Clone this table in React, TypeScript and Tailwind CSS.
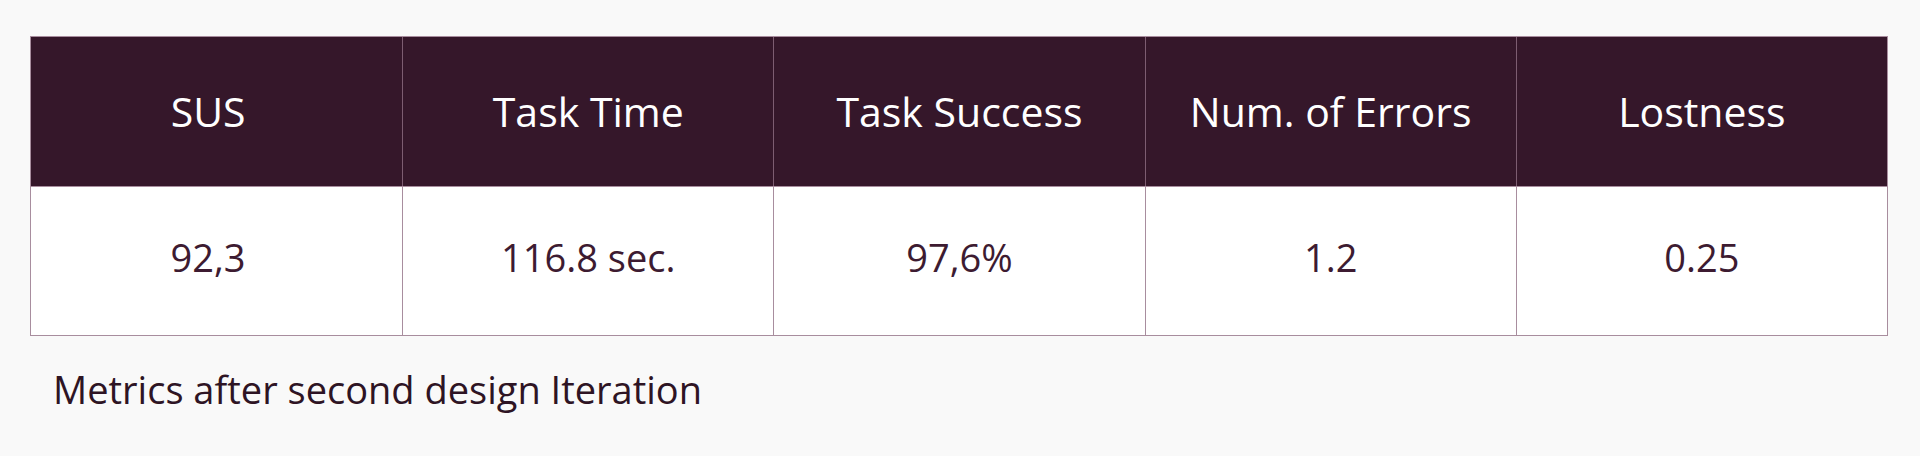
import React from "react";

const headers = ["SUS", "Task Time", "Task Success", "Num. of Errors", "Lostness"];
const values = ["92,3", "116.8 sec.", "97,6%", "1.2", "0.25"];

export default function App() {
  return (
    <div
      className="w-full h-[456px] bg-[#f9f9f9] pt-[36px] pl-[30px] pr-[32px]"
      style={{ fontFamily: '"Open Sans", "Liberation Sans", sans-serif' }}
    >
      <div className="border border-[#a88d9e] bg-white">
        <div className="grid grid-cols-5 bg-[#35172a] border-b border-[#a88d9e]">
          {headers.map((h, i) => (
            <div
              key={h}
              className={`h-[149px] flex items-center justify-center text-white text-[41px] font-normal ${
                i > 0 ? "border-l border-[#7d5d71]" : "pr-[17px]"
              }`}
            >
              {h}
            </div>
          ))}
        </div>
        <div className="grid grid-cols-5 bg-white">
          {values.map((v, i) => (
            <div
              key={v}
              className={`h-[148px] pb-[8px] flex items-center justify-center text-[#3d1b31] text-[38px] ${
                i > 0 ? "border-l border-[#a88d9e]" : "pr-[17px]"
              }`}
            >
              {v}
            </div>
          ))}
        </div>
      </div>
      <div className="mt-[30px] ml-[23px] text-[38px] leading-[46px] text-[#2e1424]">
        Metrics after second design Iteration
      </div>
    </div>
  );
}
